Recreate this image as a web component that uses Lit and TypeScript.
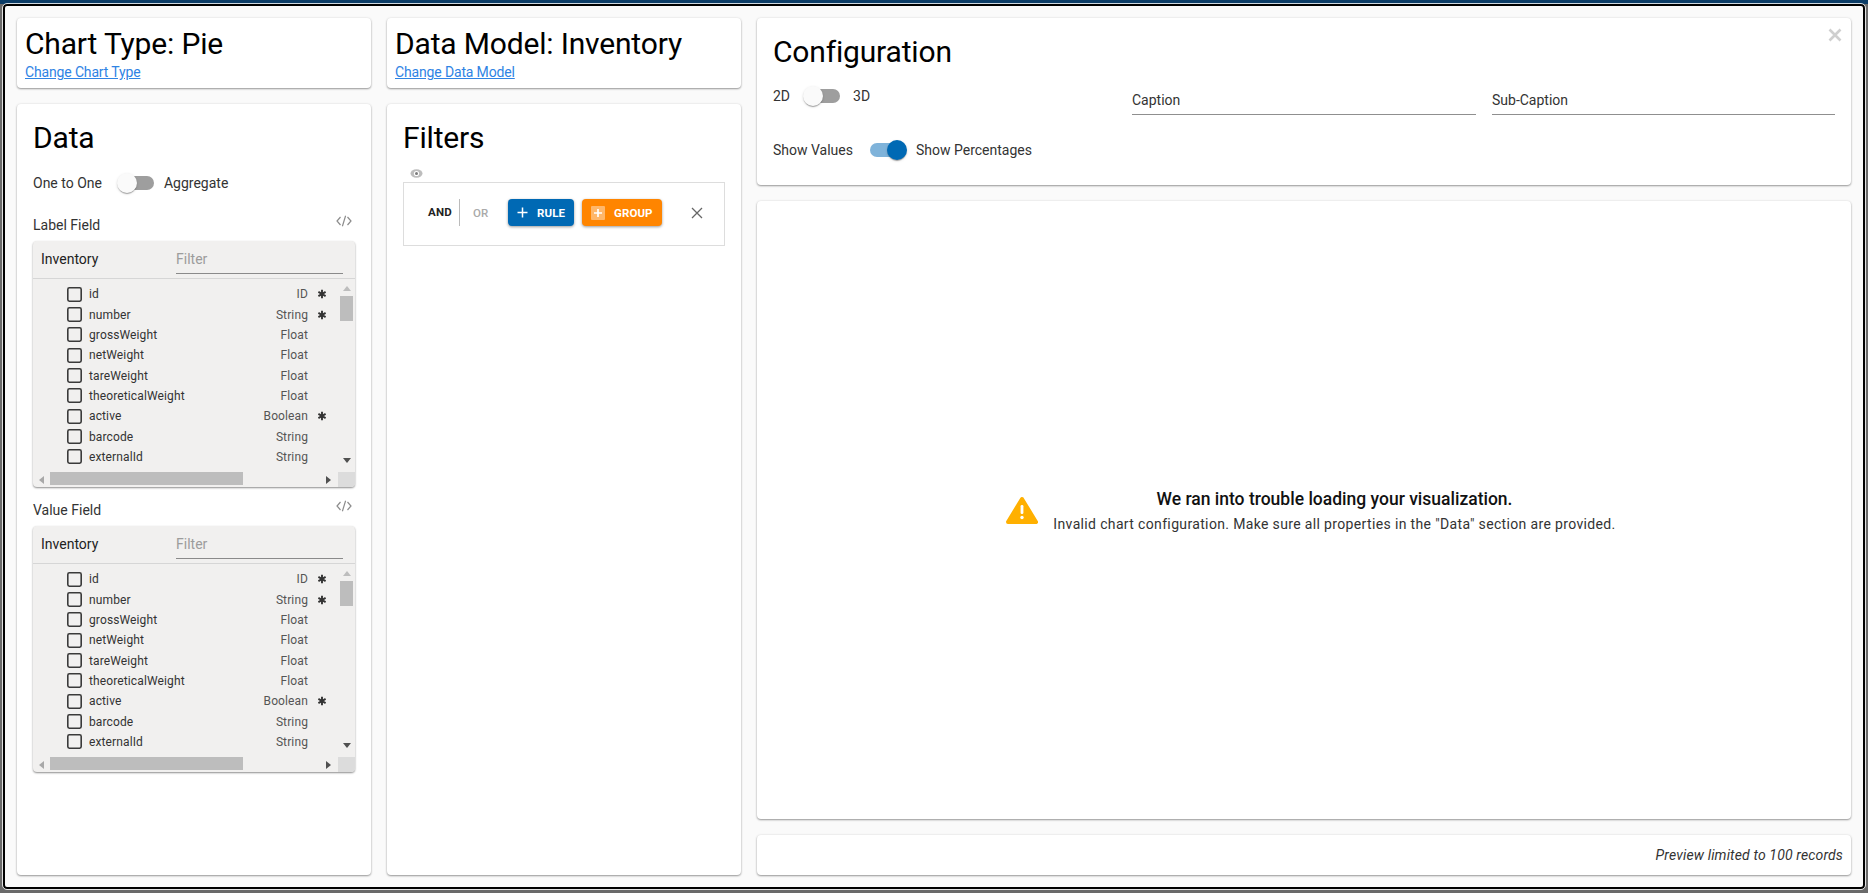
import { LitElement, html, css } from "lit";
import { customElement, property } from "lit/decorators.js";

const FIELDS: [string, string, boolean][] = [
  ["id", "ID", true],
  ["number", "String", true],
  ["grossWeight", "Float", false],
  ["netWeight", "Float", false],
  ["tareWeight", "Float", false],
  ["theoreticalWeight", "Float", false],
  ["active", "Boolean", true],
  ["barcode", "String", false],
  ["externalId", "String", false],
];

const star = html`<svg class="star" viewBox="0 0 10 10" width="10" height="10">
  <path d="M5 .8V9.2M1.4 2.9 8.6 7.1M8.6 2.9 1.4 7.1" stroke="#333" stroke-width="1.9" fill="none"/>
</svg>`;

const box = html`<svg class="box" viewBox="0 0 15 15" width="15" height="15">
  <rect x=".8" y=".8" width="13.4" height="13.4" rx="1.6" fill="none" stroke="#3a3a3a" stroke-width="1.6"/>
</svg>`;

@customElement("app-switch")
class AppSwitch extends LitElement {
  @property({ type: Boolean }) on = false;
  static styles = css`
    :host { display: block; width: 37px; height: 20px; position: relative; flex: none; }
    .track { position: absolute; left: 3px; right: 0; top: 3px; height: 14px; border-radius: 7px; background: #9e9e9e; }
    .thumb { position: absolute; left: 0; top: 0; width: 20px; height: 20px; border-radius: 50%; background: #fafafa;
      box-shadow: 0 2px 1px -1px rgba(0,0,0,.2), 0 1px 1px rgba(0,0,0,.14), 0 1px 3px rgba(0,0,0,.12); }
    .on .track { background: #7fb3da; left: 0; right: 3px; }
    .on .thumb { left: 17px; background: #0069b4; }
  `;
  render() {
    return html`<div class=${this.on ? "on" : ""} style="height:100%"><div class="track"></div><div class="thumb"></div></div>`;
  }
}

@customElement("field-list")
class FieldList extends LitElement {
  static styles = css`
    :host { display: block; }
    .list { height: 246px; background: #f1f0ef; border-radius: 4px; display: flex; flex-direction: column;
      box-shadow: 0 1px 2px rgba(0,0,0,.45); overflow: hidden; }
    .head { height: 37px; flex: none; display: flex; border-bottom: 1px solid #d6d6d6; font-size: 14px; color: #222; padding-left: 8px; box-sizing: content-box; }
    .head .name { width: 135px; line-height: 36px; }
    .filter { width: 167px; height: 32px; line-height: 36px; border-bottom: 1px solid #8a8a8a; color: #9c9c9c; font-size: 14px; }
    .body { flex: 1; display: flex; min-height: 0; }
    .rows { flex: 1; padding-top: 5px; }
    .row { height: 20.35px; display: flex; align-items: center; font-size: 12px; letter-spacing: .12px; color: #333; padding: 0 7px 0 34px; }
    .box { flex: none; margin-right: 7px; }
    .fname { flex: 1; }
    .type { color: #555; }
    .mark { width: 24px; flex: none; display: flex; justify-content: center; padding-left: 3px; box-sizing: border-box; }
    .vbar { width: 15px; flex: none; margin-right: 1px; display: flex; flex-direction: column; align-items: center; padding-top: 7px; box-sizing: border-box; }
    .vbar svg { flex: none; }
    .vthumb { width: 13px; height: 25px; background: #bdbdbd; margin-top: 5px; }
    .sp { flex: 1; }
    .hbar { height: 15px; flex: none; display: flex; align-items: center; }
    .hbar svg { flex: none; }
    .hthumb { width: 193px; height: 13px; background: #bdbdbd; margin-left: 6px; align-self: flex-start; }
    .corner { width: 17px; height: 15px; background: #dcdcdc; flex: none; }
  `;
  render() {
    return html`<div class="list">
      <div class="head"><div class="name">Inventory</div><div class="filter">Filter</div></div>
      <div class="body">
        <div class="rows">
          ${FIELDS.map(([n, t, s]) => html`<div class="row">
            ${box}<span class="fname">${n}</span><span class="type">${t}</span>
            <span class="mark">${s ? star : ""}</span>
          </div>`)}
        </div>
        <div class="vbar">
          <svg width="8" height="5" viewBox="0 0 8 5"><path d="M4 0 8 5H0Z" fill="#bdbdbd"/></svg>
          <div class="vthumb"></div><div class="sp"></div>
          <svg width="8" height="5" viewBox="0 0 8 5" style="margin-bottom:9px"><path d="M4 5 8 0H0Z" fill="#505050"/></svg>
        </div>
      </div>
      <div class="hbar">
        <svg width="5" height="8" viewBox="0 0 5 8" style="margin-left:6px"><path d="M0 4 5 0V8Z" fill="#a8a8a8"/></svg>
        <div class="hthumb"></div><div class="sp"></div>
        <svg width="5" height="8" viewBox="0 0 5 8" style="margin-right:7px"><path d="M5 4 0 0V8Z" fill="#505050"/></svg>
        <div class="corner"></div>
      </div>
    </div>`;
  }
}

@customElement("app-root")
class AppRoot extends LitElement {
  static styles = css`
    :host { display: block; width: 1868px; height: 893px; font-family: Roboto, sans-serif; overflow: hidden;
      background: linear-gradient(#0b3c66 0 4px, #6a6a6a 4px); }
    .shell { box-sizing: border-box; height: 893px; padding: 4px 3px; }
    .dialog { box-sizing: border-box; height: 885px; border: 2px solid #000; border-radius: 4px; background: #fafafa; padding: 12px;
      outline: 1px solid rgba(255,255,255,.8); outline-offset: 0;
      display: grid; grid-template-columns: 354px 354px 1fr; grid-template-rows: 70px 1fr; gap: 16px; }
    .card { background: #fff; border-radius: 4px; box-shadow: 0 1px 2px rgba(0,0,0,.38), 0 0 3px rgba(0,0,0,.08); box-sizing: border-box; }
    .top { padding: 8px; }
    h1, h2 { margin: 0; font-weight: 400; font-size: 30px; line-height: 36px; color: #000; letter-spacing: -.17px; }
    .link { font-size: 14px; line-height: 16px; color: #2f83e4; text-decoration: underline; display: block; margin-top: 2px; letter-spacing: -.15px; }
    .panel { padding: 16px; }
    .lbl { font-size: 14px; color: #333; line-height: 20px; }
    .toggle { display: flex; align-items: center; height: 20px; margin-top: 17px; }
    .toggle app-switch { margin: 0 10px 0 15px; }
    .fieldhead { display: flex; justify-content: space-between; height: 20px; margin: 22px 0 6px; }
    .fieldhead.second { margin-top: 13px; }
    .code { margin: 0 3px 0 0; }
    .qb-eye { height: 13px; margin: 11px 0 0 0; padding-left: 7px; display: flex; align-items: center; }
    .qb { height: 64px; border: 1px solid #ddd; display: flex; align-items: center; box-sizing: border-box; width: 322px; margin-top: 2px; padding: 0 0 3px 24px; }
    .and { font-size: 11.5px; font-weight: 700; color: #222; width: 31px; line-height: 27px; border-right: 1px solid #bbb; letter-spacing: .2px; }
    .or { font-size: 11.5px; font-weight: 500; color: #aaa; margin-left: 13px; width: 35px; letter-spacing: .2px; }
    .btn { height: 27px; border-radius: 4px; color: #fff; font-size: 11.5px; font-weight: 700; display: flex; align-items: center; letter-spacing: .1px;
      box-shadow: 0 1px 3px rgba(0,0,0,.4); box-sizing: border-box; }
    .rule { background: #0069b4; width: 66px; padding-left: 9px; gap: 9px; }
    .group { background: #ff8500; width: 80px; margin-left: 8px; padding-left: 9px; gap: 9px; }
    .gi { width: 14px; height: 14px; background: #ffb76a; border-radius: 1px; display: flex; align-items: center; justify-content: center; flex: none; }
    .qx { margin-left: 29px; }
    .right { grid-column: 3; grid-row: 1 / 3; display: flex; flex-direction: column; gap: 16px; min-height: 0; }
    .config { height: 167px; flex: none; padding: 16px; position: relative; }
    .config .close { position: absolute; top: 10px; right: 9px; }
    .crow { display: flex; height: 54px; }
    .c2d { width: 359px; flex: none; display: flex; align-items: center; height: 20px; margin-top: 16px; }
    .c2d app-switch { margin: 0 13px 0 13px; }
    .input { font-size: 14px; color: #333; line-height: 20px; border-bottom: 1px solid #8f8f8f; box-sizing: border-box; height: 28px; padding-top: 3px; margin-top: 17px; }
    .i1 { width: 344px; margin-right: 16px; }
    .i2 { width: 343px; }
    .vals { display: flex; align-items: center; height: 20px; margin-top: 16px; }
    .vals app-switch { margin: 0 9px 0 17px; }
    .chart { flex: 1; display: flex; align-items: center; justify-content: center; min-height: 0; }
    .err { display: flex; align-items: center; gap: 15px; margin-left: 14px; margin-top: 0; }
    .et { font-size: 17.5px; font-weight: 500; color: #111; line-height: 24px; text-align: center; }
    .es { font-size: 14px; color: #333; line-height: 20px; margin-top: 3px; letter-spacing: .35px; }
    .foot { height: 40px; flex: none; display: flex; align-items: center; justify-content: flex-end; padding-right: 8px; font-size: 14px; font-style: italic; color: #333; letter-spacing: .15px; }
  `;

  render() {
    return html`<div class="shell"><div class="dialog">
      <div class="card top"><h1>Chart Type: Pie</h1><a class="link">Change Chart Type</a></div>
      <div class="card top"><h1>Data Model: Inventory</h1><a class="link">Change Data Model</a></div>
      <div class="right">
        <div class="card config">
          <svg class="close" width="14" height="14" viewBox="0 0 14 14"><path d="M1.5 1.5 12.5 12.5M12.5 1.5 1.5 12.5" stroke="#cfcfcf" stroke-width="2.6" fill="none"/></svg>
          <h2>Configuration</h2>
          <div class="crow">
            <div class="c2d"><span class="lbl">2D</span><app-switch></app-switch><span class="lbl">3D</span></div>
            <div class="input i1">Caption</div>
            <div class="input i2">Sub-Caption</div>
          </div>
          <div class="vals"><span class="lbl">Show Values</span><app-switch on></app-switch><span class="lbl">Show Percentages</span></div>
        </div>
        <div class="card chart">
          <div class="err">
            <svg width="32" height="28" viewBox="0 0 32 28"><path d="M16 3 30 26H2Z" fill="#ffb000" stroke="#ffb000" stroke-width="4" stroke-linejoin="round"/><rect x="14.6" y="9" width="2.8" height="9" rx="1.2" fill="#fff"/><circle cx="16" cy="21.5" r="1.7" fill="#fff"/></svg>
            <div><div class="et">We ran into trouble loading your visualization.</div>
            <div class="es">Invalid chart configuration. Make sure all properties in the "Data" section are provided.</div></div>
          </div>
        </div>
        <div class="card foot">Preview limited to 100 records</div>
      </div>
      <div class="card panel">
        <h2>Data</h2>
        <div class="toggle"><span class="lbl">One to One</span><app-switch></app-switch><span class="lbl">Aggregate</span></div>
        <div class="fieldhead"><span class="lbl">Label Field</span>${this.code()}</div>
        <field-list></field-list>
        <div class="fieldhead second"><span class="lbl">Value Field</span>${this.code()}</div>
        <field-list></field-list>
      </div>
      <div class="card panel">
        <h2>Filters</h2>
        <div class="qb-eye"><svg width="13" height="11" viewBox="0 0 13 11"><ellipse cx="6.5" cy="5.5" rx="6" ry="4.2" fill="#bdbdbd"/><circle cx="6.5" cy="5.5" r="2.6" fill="#fff"/><circle cx="6.5" cy="5.5" r="1.5" fill="#7a7a7a"/></svg></div>
        <div class="qb">
          <span class="and">AND</span><span class="or">OR</span>
          <div class="btn rule"><svg width="11" height="11" viewBox="0 0 11 11"><path d="M5.5 .5V10.5M.5 5.5H10.5" stroke="#fff" stroke-width="1.5"/></svg>RULE</div>
          <div class="btn group"><span class="gi"><svg width="8" height="8" viewBox="0 0 8 8"><path d="M4 0V8M0 4H8" stroke="#fff" stroke-width="1.7"/></svg></span>GROUP</div>
          <svg class="qx" width="12" height="12" viewBox="0 0 12 12"><path d="M1 1 11 11M11 1 1 11" stroke="#666" stroke-width="1.3"/></svg>
        </div>
      </div>
    </div></div>`;
  }

  code() {
    return html`<svg class="code" width="16" height="12" viewBox="0 0 16 12"><path d="M4.5 2 1 6l3.5 4M11.5 2 15 6l-3.5 4M9.6 .8 6.4 11.2" stroke="#8c8c8c" stroke-width="1.2" fill="none"/></svg>`;
  }
}
